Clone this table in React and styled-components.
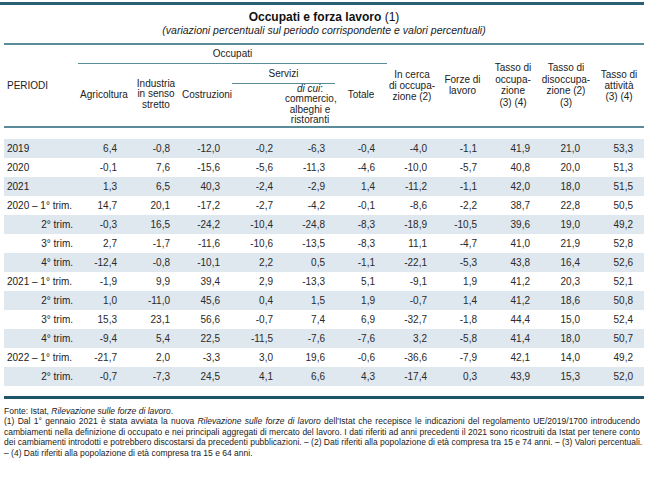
import React from 'react';
import styled, { createGlobalStyle } from 'styled-components';

const GlobalStyle = createGlobalStyle`
  body {
    margin: 0;
    background: #fff;
    font-family: 'Liberation Sans', Arial, sans-serif;
    color: #1c1c1c;
  }
`;

const Page = styled.div`
  width: 644px;
  padding-top: 2px;
`;

const TopRule = styled.div`
  height: 3px;
  background: #2c5f72;
`;

const Title = styled.h1`
  margin: 5px 0 0 4px;
  font-size: 12px;
  line-height: 14px;
  font-weight: bold;
  text-align: center;
  color: #111;
`;

const Note = styled.span`
  font-weight: normal;
`;

const Subtitle = styled.p`
  margin: 0 0 0 4px;
  font-size: 10.5px;
  line-height: 12px;
  font-style: italic;
  text-align: center;
  color: #222;
`;

const Table = styled.table`
  margin: 7px 0 0 4px;
  width: 640px;
  border-collapse: collapse;
  table-layout: fixed;
  font-size: 10px;
  border-top: 2px solid #5a8b99;
`;

const Head = styled.th`
  padding: 0;
  font-weight: normal;
  line-height: ${(p) => p.$lh || 11}px;
  text-align: ${(p) => p.$align || 'center'};
  vertical-align: middle;
  color: #222;
  border-bottom: ${(p) => (p.$rule ? '1.5px solid #5a8b99' : 'none')};
`;

const HeadRow = styled.tr`
  height: ${(p) => p.$h}px;
`;

const HeadBottom = styled.thead`
  border-bottom: 2px solid #5a8b99;
`;

const Spacer = styled.tr`
  height: ${(p) => p.$h}px;
`;

const SpacerCell = styled.td`
  padding: 0;
  height: ${(p) => p.$h}px;
`;

const Row = styled.tr`
  height: 19px;
  background: ${(p) => (p.$band ? '#dfe7ef' : 'transparent')};
`;

const Period = styled.td`
  padding: ${(p) => (p.$quarter ? '0 5px 0 0' : '0 0 0 3px')};
  text-align: ${(p) => (p.$quarter ? 'right' : 'left')};
  white-space: nowrap;
  color: #222;
`;

const Num = styled.td`
  padding: 0 ${(p) => p.$pr}px 0 0;
  text-align: right;
  color: #2a2a2a;
`;

const BottomRule = styled.div`
  margin: 10px 0 0 4px;
  width: 640px;
  height: 3px;
  background: #1e5668;
`;

const Notes = styled.div`
  margin: 7px 0 0 4px;
  width: 636px;
  font-size: 8.5px;
  line-height: 10.6px;
  color: #222;
`;

const NoteLine = styled.div`
  text-align: ${(p) => (p.$justify ? 'justify' : 'left')};
  text-align-last: ${(p) => (p.$justify ? 'justify' : 'left')};
  white-space: nowrap;
`;

const cols = [74, 52, 52, 50, 53, 50, 52, 50, 51, 50, 56, 50];
const pads = [13, 12, 12, 12, 10, 12, 10, 11, 8, 14, 11];

const rows = [
  ['2019', 0, '6,4 -0,8 -12,0 -0,2 -6,3 -0,4 -4,0 -1,1 41,9 21,0 53,3'],
  ['2020', 0, '-0,1 7,6 -15,6 -5,6 -11,3 -4,6 -10,0 -5,7 40,8 20,0 51,3'],
  ['2021', 0, '1,3 6,5 40,3 -2,4 -2,9 1,4 -11,2 -1,1 42,0 18,0 51,5'],
  ['2020 – 1° trim.', 0, '14,7 20,1 -17,2 -2,7 -4,2 -0,1 -8,6 -2,2 38,7 22,8 50,5'],
  ['2° trim.', 1, '-0,3 16,5 -24,2 -10,4 -24,8 -8,3 -18,9 -10,5 39,6 19,0 49,2'],
  ['3° trim.', 1, '2,7 -1,7 -11,6 -10,6 -13,5 -8,3 11,1 -4,7 41,0 21,9 52,8'],
  ['4° trim.', 1, '-12,4 -0,8 -10,1 2,2 0,5 -1,1 -22,1 -5,3 43,8 16,4 52,6'],
  ['2021 – 1° trim.', 0, '-1,9 9,9 39,4 2,9 -13,3 5,1 -9,1 1,9 41,2 20,3 52,1'],
  ['2° trim.', 1, '1,0 -11,0 45,6 0,4 1,5 1,9 -0,7 1,4 41,2 18,6 50,8'],
  ['3° trim.', 1, '15,3 23,1 56,6 -0,7 7,4 6,9 -32,7 -1,8 44,4 15,0 52,4'],
  ['4° trim.', 1, '-9,4 5,4 22,5 -11,5 -7,6 -7,6 3,2 -5,8 41,4 18,0 50,7'],
  ['2022 – 1° trim.', 0, '-21,7 2,0 -3,3 3,0 19,6 -0,6 -36,6 -7,9 42,1 14,0 49,2'],
  ['2° trim.', 1, '-0,7 -7,3 24,5 4,1 6,6 4,3 -17,4 0,3 43,9 15,3 52,0'],
];

const App = () => {
  return (
    <Page>
      <GlobalStyle />
      <TopRule />
      <Title>
        Occupati e forza lavoro <Note>(1)</Note>
      </Title>
      <Subtitle>(variazioni percentuali sul periodo corrispondente e valori percentuali)</Subtitle>
      <Table>
        <colgroup>
          {cols.map((w, i) => (
            <col key={i} style={{ width: w }} />
          ))}
        </colgroup>
        <HeadBottom>
          <HeadRow $h={19}>
            <Head rowSpan={3} $align="left" style={{ paddingLeft: 3 }}>PERIODI</Head>
            <Head colSpan={6} $rule>Occupati</Head>
            <Head rowSpan={3}>In cerca<br />di occupa-<br />zione (2)</Head>
            <Head rowSpan={3}>Forze di<br />lavoro</Head>
            <Head rowSpan={3} $lh={11.5}>Tasso di<br />occupa-<br />zione<br />(3) (4)</Head>
            <Head rowSpan={3} $lh={11.5}>Tasso di<br />disoccupa-<br />zione (2)<br />(3)</Head>
            <Head rowSpan={3}>Tasso di<br />attività<br />(3) (4)</Head>
          </HeadRow>
          <HeadRow $h={20}>
            <Head rowSpan={2}>Agricoltura</Head>
            <Head rowSpan={2} $lh={10.5}>Industria<br />in senso<br />stretto</Head>
            <Head rowSpan={2}>Costruzioni</Head>
            <Head colSpan={2} $rule>Servizi</Head>
            <Head rowSpan={2}>Totale</Head>
          </HeadRow>
          <HeadRow $h={42}>
            <Head />
            <Head $lh={10.5}>
              <i>di cui</i>:<br />commercio,<br />albeghi e<br />ristoranti
            </Head>
          </HeadRow>
        </HeadBottom>
        <tbody>
          <Spacer $h={11}>
            <SpacerCell colSpan={12} $h={11} />
          </Spacer>
          {rows.map(([label, quarter, vals], i) => (
            <Row key={i} $band={i % 2 === 0}>
              <Period $quarter={quarter}>{label}</Period>
              {vals.split(' ').map((v, j) => (
                <Num key={j} $pr={pads[j]}>{v}</Num>
              ))}
            </Row>
          ))}
        </tbody>
      </Table>
      <BottomRule />
      <Notes>
        <NoteLine>
          Fonte: Istat, <i>Rilevazione sulle forze di lavoro</i>.
        </NoteLine>
        <NoteLine $justify>
          (1) Dal 1° gennaio 2021 è stata avviata la nuova <i>Rilevazione sulle forze di lavoro</i> dell'Istat che
          recepisce le indicazioni del regolamento UE/2019/1700 introducendo
        </NoteLine>
        <NoteLine $justify>
          cambiamenti nella definizione di occupato e nei principali aggregati di mercato del lavoro. I dati riferiti ad
          anni precedenti il 2021 sono ricostruiti da Istat per tenere conto
        </NoteLine>
        <NoteLine $justify>
          dei cambiamenti introdotti e potrebbero discostarsi da precedenti pubblicazioni. – (2) Dati riferiti alla
          popolazione di età compresa tra 15 e 74 anni. – (3) Valori percentuali.
        </NoteLine>
        <NoteLine>– (4) Dati riferiti alla popolazione di età compresa tra 15 e 64 anni.</NoteLine>
      </Notes>
    </Page>
  );
};

export default App;
